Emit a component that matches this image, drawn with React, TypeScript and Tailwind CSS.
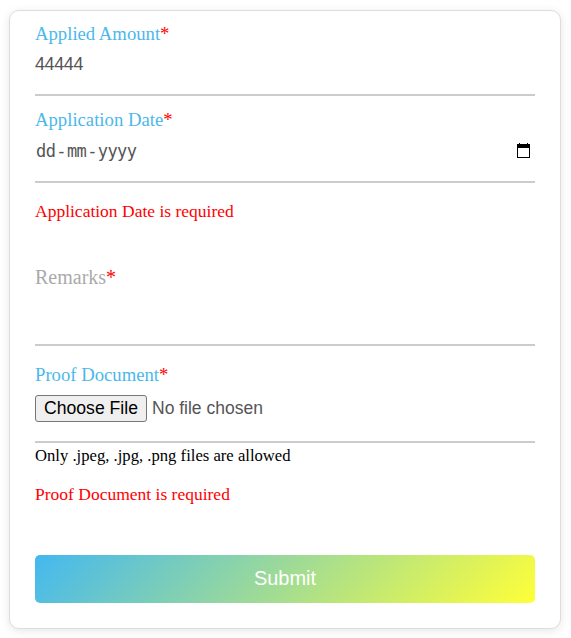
import React from "react";

const serif = "font-['Liberation_Serif','Times_New_Roman',serif]";
const sans = "font-['Liberation_Sans',Arial,sans-serif]";

function Label({ text, muted = false }: { text: string; muted?: boolean }) {
  return (
    <label className={`block h-[22px] whitespace-nowrap leading-[22px] ${serif} ${muted ? "text-[20px] text-[#aaaaaa]" : "text-[18.7px] text-[#4bb8eb]"}`}>
      {text}
      <span className="text-[#ff0000]">*</span>
    </label>
  );
}

export default function App() {
  return (
    <main className="h-[638px] w-[571px] overflow-hidden bg-white pl-[9px] pt-[10px]">
      <form className="flex h-[619px] w-[552px] flex-col rounded-[10px] border border-[#dddddd] bg-white px-[25px] pt-[12px] shadow-[0_2px_10px_rgba(0,0,0,0.1)]">
        <div className="h-[73px] border-b-2 border-[#cccccc]">
          <Label text="Applied Amount" />
          <div className={`mt-[8px] h-[22px] text-[18px] leading-[22px] tracking-[-0.4px] text-[#555555] ${sans}`}>44444</div>
        </div>
        <div className="mt-[13px] h-[74px] border-b-2 border-[#cccccc]">
          <Label text="Application Date" />
          <div className="mt-[9px] flex h-[22px] items-center justify-between pl-px pr-[4px]">
            <div className="flex gap-px font-['DejaVu_Sans_Mono',monospace] text-[17px] leading-[22px] tracking-[-0.6px] text-[#555555]">
              <span>dd</span>
              <span>-</span>
              <span>mm</span>
              <span>-</span>
              <span>yyyy</span>
            </div>
            <svg className="mb-[2px] shrink-0" width="15" height="15" viewBox="0 0 15 15" shapeRendering="crispEdges">
              <path d="M1 1H14V15H1zM3 0H4V1H3zM11 0H12V1H11z" fill="#000" />
              <path d="M2 5H13V14H2z" fill="#fff" />
            </svg>
          </div>
        </div>
        <p className={`mt-[17px] h-[22px] text-[17.5px] leading-[22px] text-[#ff0000] ${serif}`}>Application Date is required</p>
        <div className="mt-[44px] h-[80px] border-b-2 border-[#cccccc]">
          <Label text="Remarks" muted />
        </div>
        <div className="mt-[18px] h-[79px] border-b-2 border-[#cccccc]">
          <Label text="Proof Document" />
          <div className={`mt-[9px] flex h-[27px] items-center text-[17.6px] text-[#555555] ${sans}`}>
            <button type="button" className="h-[27px] w-[112px] rounded-[3px] border border-[#767676] bg-[#efefef] leading-[25px] text-black">Choose File</button>
            <span className="ml-[5px] text-[17.5px]">No file chosen</span>
          </div>
        </div>
        <p className={`mt-[2px] h-[22px] text-[16.65px] leading-[22px] text-black ${serif}`}>Only .jpeg, .jpg, .png files are allowed</p>
        <p className={`mt-[16px] h-[22px] text-[17.5px] leading-[22px] text-[#ff0000] ${serif}`}>Proof Document is required</p>
        <button type="button" className={`mt-[50px] h-[48px] w-full rounded-[5px] bg-[linear-gradient(135deg,#43b8f0,#ffff38)] pb-[2px] text-[20px] text-white ${sans}`}>Submit</button>
      </form>
    </main>
  );
}
